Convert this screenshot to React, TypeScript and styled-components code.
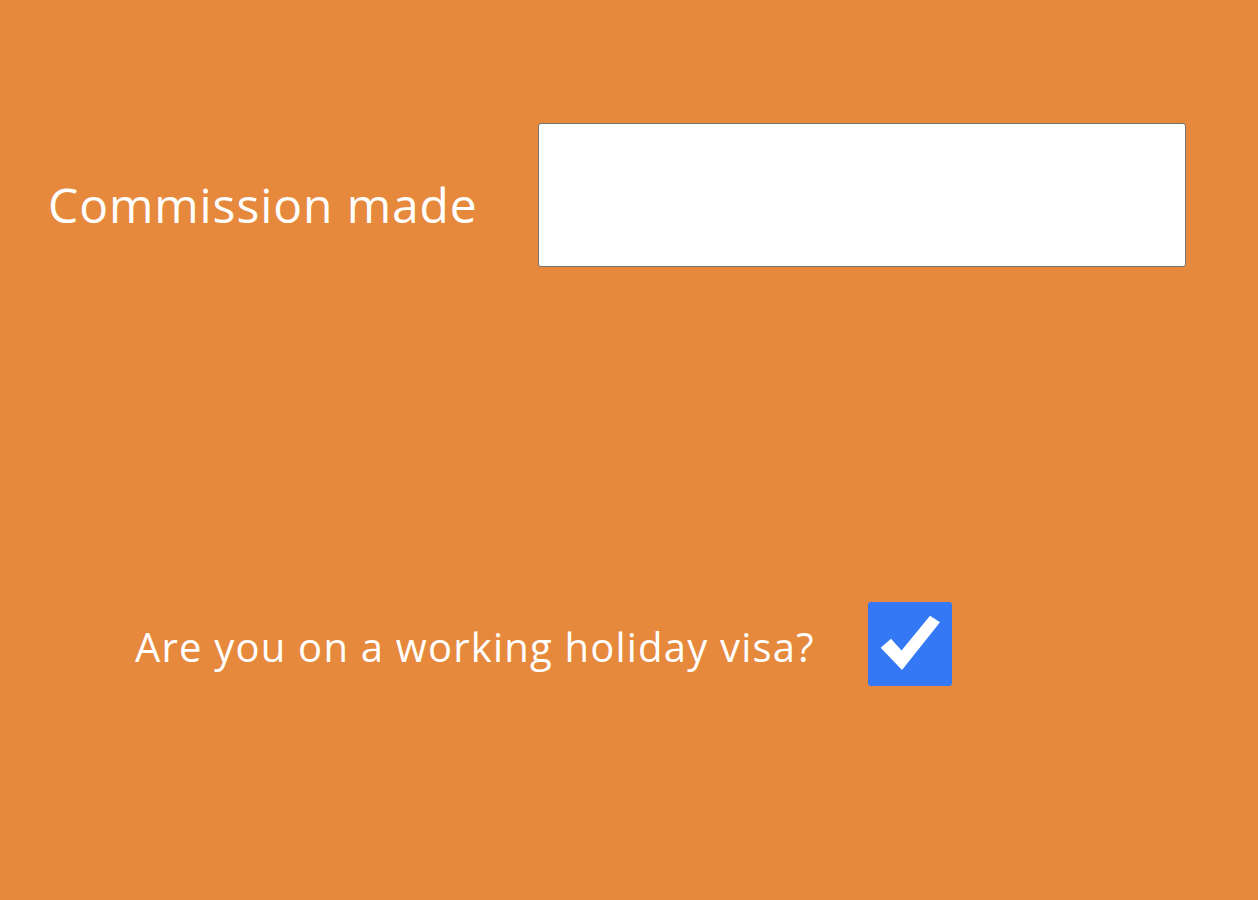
import React, { useState } from "react";
import styled, { createGlobalStyle } from "styled-components";

const Global = createGlobalStyle`
  html, body {
    margin: 0;
    padding: 0;
    background: #e6893c;
  }
  body {
    font-family: "Open Sans", "Noto Sans", sans-serif;
    color: #ffffff;
  }
`;

const Page = styled.main`
  min-height: 900px;
  background: #e6893c;
  display: flex;
  flex-direction: column;
  padding: 123px 0 0 0;
  box-sizing: border-box;
`;

const FieldRow = styled.div`
  display: flex;
  align-items: center;
  padding-left: 48px;
`;

const BigLabel = styled.label`
  font-size: 48px;
  letter-spacing: 0.9px;
  line-height: 1;
  width: 490px;
  padding-top: 20px;
  white-space: nowrap;
`;

const TextInput = styled.input`
  width: 648px;
  height: 144px;
  box-sizing: border-box;
  border: 1px solid #737373;
  border-radius: 3px;
  background: #ffffff;
  font-family: "Open Sans", sans-serif;
  font-size: 40px;
  padding: 0 16px;
  outline: none;
`;

const CheckRow = styled.div`
  display: flex;
  align-items: center;
  padding-left: 135px;
  margin-top: 335px;
`;

const CheckLabel = styled.label`
  font-size: 40px;
  letter-spacing: 1.2px;
  line-height: 1;
  width: 733px;
  padding-top: 6px;
  white-space: nowrap;
`;

const CheckBox = styled.button<{ $checked: boolean }>`
  width: 84px;
  height: 84px;
  border: none;
  border-radius: 3px;
  padding: 0;
  background: ${(p) => (p.$checked ? "#3478f6" : "#ffffff")};
  display: flex;
  align-items: center;
  justify-content: center;
  cursor: pointer;
`;

export default function App() {
  const [checked, setChecked] = useState(true);
  return (
    <>
      <Global />
      <Page>
        <FieldRow>
          <BigLabel htmlFor="commission">Commission made</BigLabel>
          <TextInput id="commission" type="text" />
        </FieldRow>
        <CheckRow>
          <CheckLabel>Are you on a working holiday visa?</CheckLabel>
          <CheckBox
            $checked={checked}
            onClick={() => setChecked(!checked)}
            aria-pressed={checked}
          >
            {checked && (
              <svg width="84" height="84" viewBox="0 0 84 84">
                <polygon
                  points="12.7,45.7 23,36.7 33.5,48.5 62,13.7 72,20.3 34,68"
                  fill="#ffffff"
                />
              </svg>
            )}
          </CheckBox>
        </CheckRow>
      </Page>
    </>
  );
}
